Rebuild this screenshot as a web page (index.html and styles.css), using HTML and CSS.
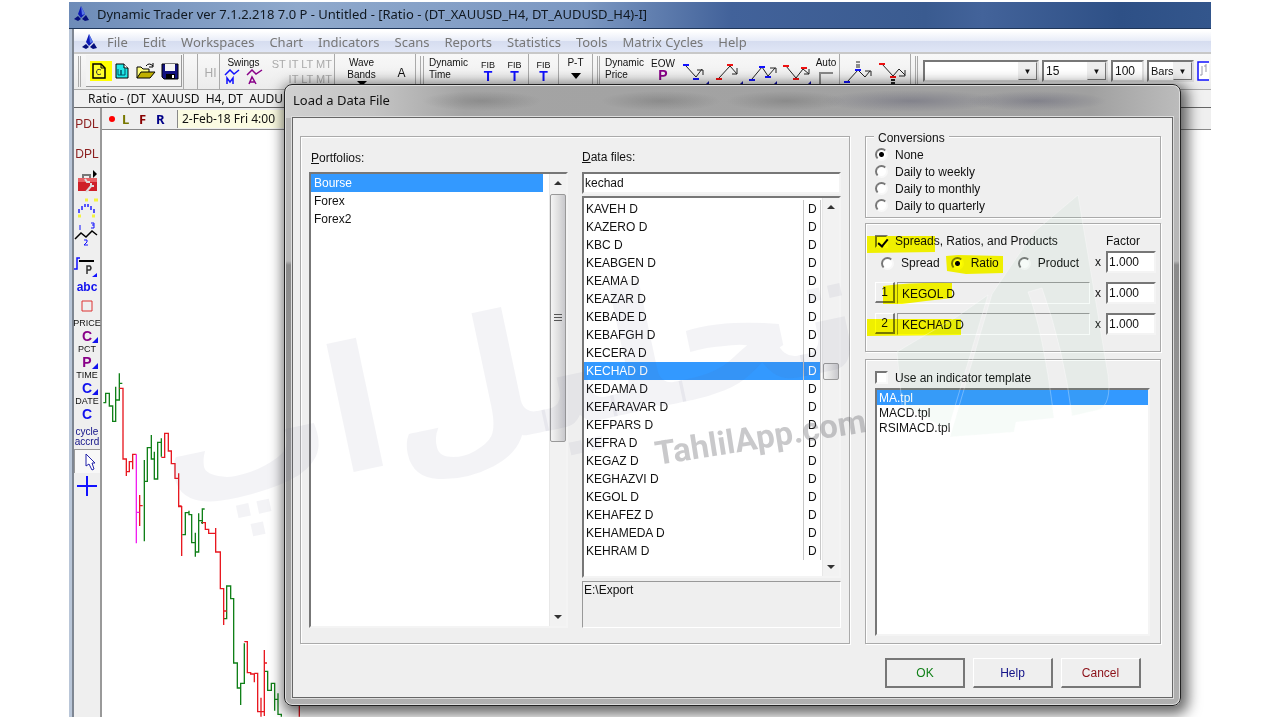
FILE: index.html
```html
<!DOCTYPE html>
<html lang="en">
<head>
<meta charset="utf-8">
<title>Dynamic Trader</title>
<link rel="stylesheet" href="styles.css">
</head>
<body>
<main class="app">
  <header class="titlebar">
    <svg class="logo" viewBox="0 0 16 16"><path d="M7 0 11 8 7 12 4 8Z" fill="#0b18b8"/><path d="M7 0 11 8 8 9Z" fill="#5a78e8"/><path d="M0 13 4 10 7 13 4 15ZM8 13 12 9 15 14 11 15Z" fill="#06107c"/></svg>
    <span>Dynamic Trader ver 7.1.2.218 7.0 P - Untitled - [Ratio - (DT_XAUUSD_H4, DT_AUDUSD_H4)-I]</span>
  </header>
  <nav class="menubar">
    <svg class="logo" viewBox="0 0 16 16"><path d="M7 0 11 8 7 12 4 8Z" fill="#0b18b8"/><path d="M7 0 11 8 8 9Z" fill="#5a78e8"/><path d="M0 13 4 10 7 13 4 15ZM8 13 12 9 15 14 11 15Z" fill="#06107c"/></svg>
    <button>File</button><button>Edit</button><button>Workspaces</button><button>Chart</button><button>Indicators</button><button>Scans</button><button>Reports</button><button>Statistics</button><button>Tools</button><button>Matrix Cycles</button><button>Help</button>
  </nav>
  <div class="toolbar">
    <i class="grip"></i>
    <div class="files">
      <button class="marked" aria-label="Open chart"><svg width="18" height="20" viewBox="0 0 18 20"><path d="M3 3H11L15 7V17H3Z" fill="#ffff30" stroke="#000" stroke-width="1.5"/><path d="M11 3V7H15" fill="none" stroke="#000"/><path d="M11 9Q7 7 6.500 11Q7 15 11 13" fill="none" stroke="#333"/></svg></button>
      <button aria-label="Open workspace"><svg width="18" height="20" viewBox="0 0 18 20"><path d="M3 3H11L15 7V17H3Z" fill="#20e8e8" stroke="#000"/><path d="M11 3V7H15" fill="#fff" stroke="#000"/><path d="M5 8V14H8V9V14H12V8" fill="none" stroke="#056"/></svg></button>
      <button aria-label="Open file"><svg width="20" height="20" viewBox="0 0 20 20"><path d="M1 17V6H5L7 8H13V11" fill="#ffff80" stroke="#000"/><path d="M1 17 5 11H19L14 17Z" fill="#c0b000" stroke="#000"/><path d="M10 5Q13 1 17 5M17 2V6H13" fill="none" stroke="#000"/></svg></button>
      <button aria-label="Save"><svg width="18" height="20" viewBox="0 0 18 20"><path d="M1 3H17V18H3L1 16Z" fill="#101080" stroke="#000"/><path d="M4 3H14V10H4Z" fill="#f4f4f4"/><path d="M5 13H14V18H5Z" fill="#000"/><path d="M11 14H13V17H11Z" fill="#fff"/></svg></button>
    </div>
    <i class="grip wide"></i>
    <button class="dim">HI</button>
    <div class="cell swings line-left"><span>Swings</span>
      <svg width="40" height="16" viewBox="0 0 40 16"><path d="M1 6 6 1 10 5 15 1M3 15V9L6 13 9 9V15" fill="none" stroke="#11f" stroke-width="1.500"/><path d="M23 6 28 1 32 5 38 1M25 15 28 8 32 15M26 13H31" fill="none" stroke="#808" stroke-width="1.500"/></svg>
    </div>
    <div class="cell levels line"><span>ST IT LT MT</span><span>IT LT MT</span></div>
    <button class="cell">Wave<br>Bands<svg width="12" height="6" viewBox="0 0 12 6"><path d="M1 0H11L6 5Z"/></svg></button>
    <button class="mono line">A</button>
    <i class="grip"></i>
    <div class="cell left">Dynamic<br>Time</div>
    <button class="cell fib">FIB<b>T</b></button>
    <button class="cell fib line">FIB<b>T</b></button>
    <button class="cell fib line">FIB<b>T</b></button>
    <button class="cell line">P-T<svg class="drop" width="12" height="8" viewBox="0 0 12 8"><path d="M1 1H11L6 7Z"/></svg></button>
    <i class="grip"></i>
    <div class="cell left">Dynamic<br>Price</div>
    <button class="cell fib eow">EOW<b>P</b></button>
    <button class="cell" aria-label="Low retracement"><svg class="swing" viewBox="0 0 28 24"><path d="M5 4 15 15 21 7M16 8H22V13" fill="none" stroke="#222"/><path d="M2 3H8M12 17H18" stroke="#11f" stroke-width="2"/><path d="M28 19V24H23Z" fill="#11a"/></svg></button>
    <button class="cell" aria-label="High retracement"><svg class="swing" viewBox="0 0 28 24"><path d="M4 16 15 4 22 12M22 6V12H17" fill="none" stroke="#222"/><path d="M1 17H7M12 3H18" stroke="#e11" stroke-width="2"/><path d="M28 19V24H23Z" fill="#11a"/></svg></button>
    <button class="cell" aria-label="Low projection"><svg class="swing" viewBox="0 0 28 24"><path d="M3 17 13 5 19 14 26 6M21 6H27V11" fill="none" stroke="#222"/><path d="M0 18H6M10 5H16M16 15H22" stroke="#11f" stroke-width="2"/><path d="M28 19V24H23Z" fill="#11a"/></svg></button>
    <button class="cell" aria-label="High projection"><svg class="swing" viewBox="0 0 28 24"><path d="M3 4 13 16 20 7 26 12M26 7V12H21" fill="none" stroke="#222"/><path d="M0 4H6M10 17H16M18 6H24" stroke="#e11" stroke-width="2"/><path d="M28 19V24H23Z" fill="#11a"/></svg></button>
    <label class="cell auto line">Auto<input type="checkbox"></label>
    <button class="cell" aria-label="Extension up"><svg class="swing tall" viewBox="0 0 28 26"><path d="M3 22 14 10 21 17 26 11M21 11H27V16" fill="none" stroke="#222"/><path d="M0 22H6M11 10H17" stroke="#11f" stroke-width="2"/><path d="M12 2H16M12 5H16M12 7H16" stroke="#222"/></svg></button>
    <button class="cell line" aria-label="Extension down"><svg class="swing tall" viewBox="0 0 28 26"><path d="M3 4 14 16 20 9 26 15M26 10V16H20" fill="none" stroke="#222"/><path d="M0 4H6M11 17H17" stroke="#e11" stroke-width="2"/><path d="M12 20H16M12 23H16" stroke="#222" stroke-width="2"/></svg></button>
    <i class="grip"></i>
    <span class="combo"><select aria-label="Symbol"><option></option></select></span>
    <span class="combo"><select aria-label="Interval"><option>15</option></select></span>
    <input class="count" aria-label="Count" value="100">
    <span class="combo bars"><select aria-label="Unit"><option>Bars</option></select></span>
    <button class="pane" aria-label="Chart view"><svg width="12" height="20" viewBox="0 0 12 20"><path d="M12 1H1V19H12" fill="#fff" stroke="#11f" stroke-width="1.500"/><path d="M5 5V14M3 14H5M9 3V11M7 5H9" stroke="#99a" fill="none"/></svg></button>
  </div>
  <div class="doc-title">Ratio - (DT  XAUUSD  H4, DT  AUDU</div>
  <div class="work">
    <aside class="tools">
      <button class="pdl">PDL</button>
      <button class="pdl dpl">DPL</button>
      <button aria-label="Toolbox"><svg width="26" height="26" viewBox="0 0 26 26"><path d="M9 8V5H16V8" fill="none" stroke="#777" stroke-width="2"/><path d="M4 8H23V21H4Z" fill="#cf2028"/><path d="M4 8H23V12H4Z" fill="#e86064"/><path d="M11 9 13 12 16 12M12 22 18 15M17 13V16H20" stroke="#ddd" stroke-width="2" fill="none"/><path d="M19 0V8L23 4Z"/></svg></button>
      <button aria-label="Swing dots"><svg width="26" height="26" viewBox="0 0 26 26"><path d="M5 13V17M8 10V14M11 8V11M14 8V11M17 10V14M20 13V17" stroke="#22f" stroke-width="1.500"/><path d="M11 4H14M20 4H24M4 20H7M18 20H21" stroke="#f3f340" stroke-width="3"/></svg></button>
      <button aria-label="Wave labels"><svg width="26" height="28" viewBox="0 0 26 28"><path d="M1 17 7 11 12 15 18 9 23 13" fill="none" stroke="#000" stroke-width="1.500"/><path d="M6 3V8M17 1H20V6H17M18 3H20M10 18H13V20L10 23H14" fill="none" stroke="#11f"/></svg></button>
      <button class="p-tool" aria-label="Price label"><svg width="26" height="29" viewBox="0 0 26 29"><path d="M0 19H3V8H6" stroke="#11f" fill="none" stroke-width="1.500"/><path d="M5 11H20" stroke="#000" stroke-width="2"/><path d="M23 23V27H18Z" fill="#11f"/><path d="M13 24V16H16Q18 18 16 20H13" fill="none" stroke="#333" stroke-width="1.500"/></svg></button>
      <button class="abc">abc</button>
      <button class="box" aria-label="Rectangle"><svg width="14" height="12" viewBox="0 0 14 12"><path d="M2 1H12V11H2Z" fill="none" stroke="#d33"/></svg></button>
      <button class="calc purple">PRICE<b>C</b></button>
      <button class="calc purple">PCT<b>P</b></button>
      <button class="calc">TIME<b>C</b></button>
      <button class="calc plain">DATE<b>C</b></button>
      <button class="cycle">cycle<br>accrd</button>
      <button class="pointer" aria-label="Pointer"><svg width="16" height="20" viewBox="0 0 16 20"><path d="M4 2V14L7 12 10 18 12 17 10 11H13Z" fill="#fff" stroke="#22a"/></svg></button>
      <button class="plus" aria-label="Crosshair"><svg width="22" height="22" viewBox="0 0 22 22"><path d="M11 1V21M1 11H21" stroke="#11f" stroke-width="2"/></svg></button>
    </aside>
    <section class="chart">
      <div class="chart-head"><i class="dot"></i><b class="l">L</b><b class="f">F</b><b class="r">R</b><span class="date">2-Feb-18 Fri 4:00</span></div>
      <svg class="plot" viewBox="102 130 240 587" preserveAspectRatio="xMinYMin">
        <g transform="translate(64 310) scale(.33333)" fill="none" stroke-width="4">
          <g stroke="#108018"><path d="M118 278H125V250H136V288H146V334H155V230M155 270H166V190M166 220H175M241 450V694M241 514H250V413H262M262 375V447H271M271 425V507H281V397H292M292 385V440"/></g>
          <g stroke="#e81820"><path d="M166 235H177V447H187V498M187 485H196V455H206V478V433H217M227 555V648M227 587H236M292 442H302V370H313V423H322V461H333V505H344M344 490V590H353V738"/></g>
          <path d="M217 433V700M217 607H226" stroke="#f020f0"/>
        </g>
        <g transform="translate(64 500) scale(.33333)" fill="none" stroke-width="4">
          <g stroke="#108018"><path d="M355 104H364V38H375M375 32V44H383V128H394M394 98V170M394 156H404V40M404 62H415M422 27H415V72M480 356H488V258H500V296H509V489H520V564H530M530 615V550H541V430M601 514H611V571H622V550H632V632M632 598H642M642 580V643H652V650M411 68H415"/></g>
          <g stroke="#e81820"><path d="M344 18H353M415 68H424V88H434V100H455M455 84V156H469V266H479V375M479 333H488M541 425H550V518H560V522H571V547M571 520H581V635H601M591 593V650M601 450V648M601 489H609M706 610V650"/></g>
        </g>
      </svg>
    </section>
  </div>

  <section class="dialog" role="dialog" aria-labelledby="dlg-title">
    <h1 id="dlg-title">Load a Data File</h1>
    <form class="client">
      <div class="panels">
        <div class="group sources">
          <div class="column portfolios">
            <span class="caption"><u>P</u>ortfolios:</span>
            <div class="listbox">
              <ul><li class="selected">Bourse</li><li>Forex</li><li>Forex2</li></ul>
              <div class="scroll"><i class="up"></i><i class="thumb long"></i><i class="down"></i></div>
            </div>
          </div>
          <div class="column data">
            <label class="caption" for="file"><u>D</u>ata files:</label>
            <input id="file" class="field" value="kechad">
            <div class="listbox">
              <table>
                <tr><td>KAVEH D</td><td>D</td></tr>
                <tr><td>KAZERO D</td><td>D</td></tr>
                <tr><td>KBC D</td><td>D</td></tr>
                <tr><td>KEABGEN D</td><td>D</td></tr>
                <tr><td>KEAMA D</td><td>D</td></tr>
                <tr><td>KEAZAR D</td><td>D</td></tr>
                <tr><td>KEBADE D</td><td>D</td></tr>
                <tr><td>KEBAFGH D</td><td>D</td></tr>
                <tr><td>KECERA D</td><td>D</td></tr>
                <tr class="selected"><td>KECHAD D</td><td>D</td></tr>
                <tr><td>KEDAMA D</td><td>D</td></tr>
                <tr><td>KEFARAVAR D</td><td>D</td></tr>
                <tr><td>KEFPARS D</td><td>D</td></tr>
                <tr><td>KEFRA D</td><td>D</td></tr>
                <tr><td>KEGAZ D</td><td>D</td></tr>
                <tr><td>KEGHAZVI D</td><td>D</td></tr>
                <tr><td>KEGOL D</td><td>D</td></tr>
                <tr><td>KEHAFEZ D</td><td>D</td></tr>
                <tr><td>KEHAMEDA D</td><td>D</td></tr>
                <tr><td>KEHRAM D</td><td>D</td></tr>
              </table>
              <div class="scroll"><i class="up"></i><i class="thumb short"></i><i class="down"></i></div>
            </div>
            <div class="path">E:\Export</div>
          </div>
        </div>
        <div class="options">
          <fieldset class="group conversions">
            <legend>Conversions</legend>
            <label><input type="radio" name="conv" checked>None</label>
            <label><input type="radio" name="conv">Daily to weekly</label>
            <label><input type="radio" name="conv">Daily to monthly</label>
            <label><input type="radio" name="conv">Daily to quarterly</label>
          </fieldset>
          <div class="group spreads">
            <div class="row head"><label><input type="checkbox" checked>Spreads, Ratios, and Products</label><span class="factor">Factor</span></div>
            <div class="row kinds"><div class="radios"><label><input type="radio" name="kind">Spread</label><label><input type="radio" name="kind" checked>Ratio</label><label><input type="radio" name="kind">Product</label></div><span>x</span><input class="field" aria-label="Factor" value="1.000"></div>
            <div class="row pick"><button type="button">1</button><output>KEGOL D</output><span>x</span><input class="field" aria-label="Factor 1" value="1.000"></div>
            <div class="row pick"><button type="button">2</button><output>KECHAD D</output><span>x</span><input class="field" aria-label="Factor 2" value="1.000"></div>
            <svg class="marker" width="296" height="129" viewBox="0 0 296 129"><path d="M1 12H69V28L1 29ZM80 32 92 31 137 32V49L100 50 81 47ZM17 62Q50 58 86 59V74L60 77 36 80 17 80ZM1 95H95V111L1 112Z" fill="#ffff00"/></svg>
          </div>
          <div class="group template">
            <label><input type="checkbox">Use an indicator template</label>
            <ul class="listbox"><li class="selected">MA.tpl</li><li>MACD.tpl</li><li>RSIMACD.tpl</li></ul>
          </div>
        </div>
      </div>
      <div class="actions"><button type="button" class="ok">OK</button><button type="button" class="help">Help</button><button type="button" class="cancel">Cancel</button></div>
    </form>
  </section>
  <svg class="watermark" width="1142" height="715" viewBox="69 2 1142 715">
    <g transform="rotate(-12 510 400)"><text class="wm-word" x="512" y="438" direction="rtl" text-anchor="middle">تحلیل‌اپ</text></g>
    <text class="wm-site" x="657" y="465" transform="rotate(-9 657 465)">TahlilApp.com</text>
    <g class="wm-mark"><path d="M1078 195 1108 375Q1112 405 1098 410L1072 416Q1064 350 1042 288L1028 292Q1043 330 1054 418L1016 422 1014 432 950 437 992 294 1034 232Z"/><path d="M988 295 955 318Q908 345 897 352L902 405 948 430Z"/></g>
  </svg>
</main>
</body>
</html>
```
FILE: styles.css
```css
* { box-sizing: border-box; }
body { margin: 0; background: #fff; color: #111; font: 12px/16px "Liberation Sans", Arial, sans-serif; }
button, input, select { font: inherit; color: inherit; }
button { padding: 0; border: 0; background: none; }
ul { list-style: none; margin: 0; padding: 0; }

.app { position: relative; display: flex; flex-direction: column; height: calc(100vh - 5px); min-height: 640px; margin: 2px 69px 3px; padding-left: 5px; overflow: hidden; background: linear-gradient(90deg, #b9c6d8 0 3px, #7e8692 3px 5px, #efefef 5px); }
.logo { width: 16px; height: 16px; flex: none; }
.titlebar { display: flex; align-items: center; gap: 7px; height: 27px; margin-left: -5px; padding: 0 0 3px 5px; background: linear-gradient(90deg, #6e8cb8 0, #8fa9cc 20%, #7c98c2 45%, #42629a 58%, #3a5b90 75%, #43639a 80%, #2e5086 92%, #33568c); border-bottom: 1px solid #1e3558; color: #101820; font: 13px/20px "Noto Sans", "Open Sans", sans-serif; white-space: nowrap; }
.menubar { display: flex; align-items: center; gap: 15px; height: 23px; padding-left: 8px; border-top: 2px solid #fff; background: linear-gradient(#fff, #e9edf8 45%, #d6ddf0 50%, #e0e6f6); color: #777; font: 13px/20px "Noto Sans", "Open Sans", sans-serif; }
.menubar .logo { margin-right: -6px; }

.toolbar { display: grid; grid-template-columns: 12px 96px 20px 17px 48px 68px 53px 28px 13px 46px 26px 28px 30px 34px 12px 43px 30px 34px 34px 34px 33px 27px 36px 35px 12px 119px 69px 36px 50px 1fr; height: 38px; border-top: 2px solid #c8c8c8; background: linear-gradient(#f8f8f8, #ececec); border-bottom: 1px solid #aaa; font-size: 10px; line-height: 12px; }
.grip { margin: 2px 5px 2px 4px; border: solid #aaa; border-width: 0 1px; }
.grip.wide { margin: 0 4px 0 1px; border-width: 0 1px; }
.files { display: flex; align-items: center; gap: 5px; padding-left: 4px; margin: 1px 0 2px; border: solid #999; border-width: 0 1px 1px 0; background: #f3f3f3; }
.files button { display: flex; }
.marked { background: #ff0; box-shadow: 4px 0 #ff0; }
.dim { color: #aaa; font-size: 12px; padding-top: 2px; }
.cell { display: flex; flex-direction: column; align-items: center; padding-top: 3px; white-space: nowrap; }
.cell.left { align-items: flex-start; }
.line { border-right: 1px solid #aaa; }
.line-left { border-left: 1px solid #aaa; }
.levels { padding: 4px 2px 0 0; gap: 3px; color: #aaa; font-size: 11px; align-items: flex-end; }
.mono { padding-top: 3px; font-size: 12px; }
.fib { padding-top: 7px; font-size: 9px; line-height: 9px; }
.fib b { color: #11f; font: bold 14px/12px "Liberation Sans", sans-serif; }
.eow { padding-top: 4px; font-size: 10px; line-height: 11px; }
.eow b { color: #808; }
.drop { margin-top: 3px; }
.swing { width: 28px; height: 24px; margin-top: 5px; }
.swing.tall { height: 26px; margin-top: 3px; }
.auto input { width: 14px; height: 14px; margin: 3px 0 0; appearance: none; border: 2px solid #888; border-width: 2px 0 0 2px; background: #eee; }
.combo { position: relative; height: 22px; margin: 6px 3px 0 0; border: 2px solid #777; border-color: #777 #ddd #ddd #777; background: #fff; }
.combo select { width: 100%; height: 18px; padding: 0 2px; appearance: none; border: 0; background: none; font-size: 12px; }
.combo::after { content: "▼"; position: absolute; inset: 0 0 0 auto; width: 17px; background: #eee; border: 1px solid #999; border-color: #eee #777 #777 #eee; text-align: center; line-height: 17px; font-size: 8px; pointer-events: none; }
.bars select { font-size: 11px; }
.count { height: 22px; margin: 6px 3px 0 0; min-width: 0; padding: 0 2px; border: 2px solid #777; border-color: #777 #ddd #ddd #777; background: #fff; font-size: 12px; }
.pane { display: flex; padding-top: 7px; overflow: hidden; }
.doc-title { height: 18px; padding-left: 14px; background: #f1f1f1; border-bottom: 1px solid #666; font: 12px/18px "Noto Sans", "Open Sans", sans-serif; white-space: pre; }

.work { display: flex; flex: 1; min-height: 0; }
.tools { display: flex; flex-direction: column; width: 28px; padding-top: 2px; border-right: 2px solid #999; background: #efefef; }
.tools button { display: flex; flex-direction: column; align-items: center; justify-content: center; flex: none; height: 26px; }
.tools button:nth-child(5) { height: 28px; }
.tools .pdl { height: 28px; color: #8c2020; font-size: 12px; }
.tools .dpl { height: 32px; }
.tools .p-tool { height: 29px; }
.tools .abc { height: 16px; color: #11e; font-weight: bold; }
.tools .box { height: 22px; }
.tools .calc { position: relative; font-size: 9px; line-height: 11px; }
.calc b { color: #11e; font: bold 14px/14px "Liberation Sans", sans-serif; }
.purple b { color: #808; }
.calc::after { content: ""; position: absolute; right: 2px; bottom: 0; border: 3px solid; border-color: transparent #11e #11e transparent; }
.plain::after { display: none; }
.tools .cycle { margin-top: 4px; height: 24px; color: #118; font-size: 10px; line-height: 10px; }
.tools .pointer { height: 24px; padding-left: 4px; background: #f8f8f8; border: solid #999; border-width: 1px 0 0 1px; }
.chart { flex: 1; min-width: 0; background: #fff; }
.chart-head { display: flex; align-items: center; height: 22px; padding-left: 7px; background: #efefef; border-bottom: 1px solid #888; font: 13px/18px "Noto Sans", sans-serif; }
.dot { width: 6px; height: 6px; margin-right: 7px; border-radius: 50%; background: #f00; }
.chart-head b { width: 17px; }
.l { color: #770; } .f { color: #800; } .r { color: #008; }
.date { margin-left: 4px; padding: 0 4px; width: 110px; background: #fbfbe2; border-left: 1px solid #888; font: 12px/18px "Noto Sans", sans-serif; white-space: nowrap; }
.plot { display: block; width: 240px; height: 587px; }

.dialog { position: absolute; top: 82px; right: 30px; bottom: 11px; left: 215px; display: flex; flex-direction: column; padding: 0 7px 7px; border: 1px solid #222; border-radius: 8px; background: radial-gradient(ellipse 60px 10px at 22% 16px, rgba(70,70,70,.25), transparent), radial-gradient(ellipse 60px 10px at 42% 16px, rgba(70,70,70,.25), transparent), radial-gradient(ellipse 60px 10px at 56% 16px, rgba(70,70,70,.25), transparent), radial-gradient(ellipse 90px 11px at 70% 16px, rgba(60,60,90,.3), transparent), radial-gradient(ellipse 70px 10px at 84% 16px, rgba(60,60,90,.3), transparent), linear-gradient(90deg, #d0d0d0, #c4c4c4 10%, #a4a4a4 20%, #a0a0a0 90%, #bcbcbc) top / 100% 33px no-repeat, linear-gradient(#b8b8b8 0 176px, #8a8a8a 180px, #999 60%, #b0b0b0); box-shadow: inset 0 0 0 1px #ddd, 3px 4px 14px 4px rgba(0,0,0,.6); }
.dialog h1 { height: 32px; margin: 0; padding-left: 1px; font: 13px/31px "Noto Sans", "Open Sans", sans-serif; }
.client { flex: 1; display: flex; flex-direction: column; min-height: 0; padding: 18px 11px 9px 7px; border: 1px solid #666; box-shadow: 0 0 0 1px #ddd; background: #efefef; }
.panels { flex: 1; display: flex; gap: 15px; min-height: 0; }
.group { margin: 0; border: 1px solid #aaa; box-shadow: 1px 1px #fff, inset 1px 1px #fff; }
.sources { flex: 1 1 550px; display: flex; gap: 14px; padding: 12px 8px 15px; min-width: 0; }
.column { flex: 1; display: flex; flex-direction: column; min-width: 0; }
.caption { display: block; height: 23px; padding-left: 2px; line-height: 18px; }
.data .caption { padding-left: 0; line-height: 16px; }
.listbox { flex: 1; display: flex; min-height: 0; border: 2px solid #777; border-color: #777 #f4f4f4 #f4f4f4 #777; background: #fff; }
.listbox > ul { flex: 1; margin-right: 6px; }
.listbox > ul li { height: 18px; padding-left: 3px; line-height: 18px; }
.listbox .selected { background: #3399ff; color: #fff; }
.scroll { position: relative; width: 17px; display: flex; flex-direction: column; background: #f2f2f2; border-left: 1px solid #e8e8e8; }
.up, .down { height: 18px; display: flex; align-items: center; justify-content: center; }
.up::before, .down::before { content: ""; border: 4px solid transparent; border-top-width: 0; border-bottom-color: #333; }
.down { margin-top: auto; }
.down::before { transform: rotate(180deg); }
.thumb { width: 16px; border: 1px solid #999; border-radius: 2px; background: linear-gradient(90deg, #f4f4f4, #e0e0e0 50%, #c8c8cc); }
.thumb.long { height: 248px; margin-top: 2px; display: flex; align-items: center; justify-content: center; }
.thumb.long::before { content: ""; width: 8px; height: 9px; background: repeating-linear-gradient(#555 0 1px, transparent 1px 3px); }
.thumb.short { height: 17px; margin-top: 147px; }
.field { min-width: 0; height: 22px; padding: 0 2px; border: 2px solid #777; border-color: #777 #f4f4f4 #f4f4f4 #777; border-radius: 0; background: #fff; }
.data .field { margin-bottom: 2px; padding: 0 1px; }
.data table { flex: 1; align-self: flex-start; border-collapse: collapse; margin: 2px 1px 0 0; }
.data td { height: 18px; padding: 0 0 0 2px; line-height: 18px; }
.data td:last-child { width: 17px; padding-left: 4px; border: solid #c8c8c8; border-width: 0 1px; }
.path { height: 47px; margin-top: 3px; padding-left: 1px; line-height: 17px; border: 1px solid #999; border-color: #999 #fff #fff #999; }

.options { flex: 0 0 296px; display: flex; flex-direction: column; }
.options label { display: flex; align-items: center; }
.options input[type="radio"], .options input[type="checkbox"] { flex: none; appearance: none; width: 13px; height: 13px; margin: 0 7px 0 0; border: 2px solid #888; border-color: #777 #f8f8f8 #f8f8f8 #777; background: #fff; }
.options input[type="radio"] { border-radius: 50%; }
.options input[type="radio"]:checked { background: radial-gradient(circle, #000 2px, #fff 3px); }
.spreads input[type="checkbox"]:checked { position: relative; }
.spreads input[type="checkbox"]:checked::after { content: ""; position: absolute; left: 3px; top: 0; width: 4px; height: 8px; border: solid #000; border-width: 0 2px 2px 0; transform: rotate(40deg); }
.conversions { position: relative; height: 82px; padding: 9px 0 0 9px; }
.conversions legend { position: absolute; top: -7px; left: 8px; padding: 0 4px; line-height: 16px; background: #efefef; }
.conversions label { height: 17px; }
.spreads { position: relative; height: 129px; margin-top: 5px; padding: 7px 4px 0 9px; }
.row { display: flex; align-items: center; }
.row .field { flex: none; width: 50px; height: 22px; padding: 0 1px; }
.row > span:not(.factor) { width: 11px; flex: none; }
.head { height: 20px; justify-content: space-between; }
.factor { width: 50px; }
.kinds { height: 22px; }
.radios { flex: 1; display: flex; gap: 11px; padding: 2px 0 0 6px; }
.radios label:last-child { margin-left: 8px; }
.pick { height: 31px; padding-top: 8px; }
.pick button { width: 20px; height: 21px; border: 1px solid #777; border-width: 1px 2px 2px 1px; border-color: #fff #777 #777 #fff; }
.pick output { flex: 1; height: 22px; margin: 0 5px 0 2px; padding-left: 4px; line-height: 23px; border: 1px solid #999; border-color: #999 #fff #fff #999; }
.marker { position: absolute; top: 0; left: 0; mix-blend-mode: multiply; pointer-events: none; }
.template { flex: 1; display: flex; flex-direction: column; min-height: 0; margin-top: 7px; padding: 9px 10px 7px 9px; }
.template label { height: 17px; margin-bottom: 2px; }
.template .listbox { display: block; margin-right: 0; padding: 0 0 0 2px; }
.template .listbox li { height: 15px; margin-left: -2px; padding-left: 2px; line-height: 16px; }
.actions { display: flex; justify-content: flex-end; gap: 8px; margin: 14px 20px 0 0; }
.actions button { width: 80px; height: 30px; border: 1px solid #777; border-width: 1px 2px 2px 1px; border-color: #fff #777 #777 #fff; }
.actions .ok { border: 2px solid #777; color: #118018; }
.actions .help { color: #118; }
.actions .cancel { color: #8c1018; }

.watermark { position: absolute; top: 0; left: 0; pointer-events: none; }
.wm-word { font: bold 172px "DejaVu Sans", sans-serif; fill: rgba(90, 90, 130, .07); }
.wm-site { font: bold 33px Roboto, sans-serif; fill: rgba(100, 100, 105, .35); }
.wm-mark { fill: rgba(110, 180, 140, .06); stroke: rgba(255, 255, 255, .3); }
```
